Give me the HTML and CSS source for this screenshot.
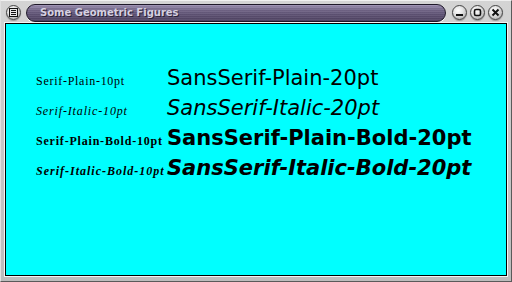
FILE: index.html
```html
<!DOCTYPE html>
<html>
<head>
<meta charset="utf-8">
<link rel="stylesheet" href="styles.css">
</head>
<body>
<div class="window">
  <div class="titlebar">
    <div class="btn menu-btn">
      <svg width="9" height="9" viewBox="0 0 9 9"><rect x="0.5" y="0.5" width="8" height="8" fill="#e8e8e8" stroke="#111"/><path d="M2 2.5H7M2 4.5H7M2 6.5H7" stroke="#111" stroke-width="1"/></svg>
    </div>
    <div class="title-pill"><span class="title-text">Some Geometric Figures</span></div>
    <div class="controls">
      <div class="btn"><svg width="9" height="9" viewBox="0 0 9 9"><rect x="1" y="6" width="7" height="2" fill="#111"/></svg></div>
      <div class="btn"><svg width="9" height="9" viewBox="0 0 9 9"><rect x="1.5" y="1.5" width="6" height="6" rx="1.5" fill="none" stroke="#111" stroke-width="1.6"/></svg></div>
      <div class="btn"><svg width="9" height="9" viewBox="0 0 9 9"><path d="M1.5 1.5L7.5 7.5M7.5 1.5L1.5 7.5" stroke="#111" stroke-width="2"/></svg></div>
    </div>
  </div>
  <div class="content">
    <div class="grid">
      <span class="serif">Serif-Plain-10pt</span>
      <span class="sans">SansSerif-Plain-20pt</span>
      <span class="serif italic">Serif-Italic-10pt</span>
      <span class="sans italic">SansSerif-Italic-20pt</span>
      <span class="serif bold">Serif-Plain-Bold-10pt</span>
      <span class="sans bold">SansSerif-Plain-Bold-20pt</span>
      <span class="serif italic bold wide">Serif-Italic-Bold-10pt</span>
      <span class="sans italic bold">SansSerif-Italic-Bold-20pt</span>
    </div>
  </div>
</div>
</body>
</html>
```

FILE: styles.css
```css
html, body {
  margin: 0;
  padding: 0;
  width: 512px;
  height: 282px;
  overflow: hidden;
}
.window {
  box-sizing: border-box;
  width: 512px;
  height: 282px;
  display: flex;
  flex-direction: column;
  background: linear-gradient(to bottom, #d4d4d4, #bcbcbc);
  border: 1px solid #5a5a5a;
  border-top-color: #f0f0f0;
  border-left-color: #e0e0e0;
  padding: 0 4px 5px 4px;
}
.titlebar {
  height: 22px;
  display: flex;
  align-items: center;
  gap: 5px;
  padding-left: 1px;
}
.btn {
  width: 15px;
  height: 15px;
  box-sizing: border-box;
  border-radius: 50%;
  border: 1px solid #444;
  background: radial-gradient(circle at 40% 35%, #ffffff 0%, #e4e4e4 40%, #9a9a9a 100%);
  display: flex;
  align-items: center;
  justify-content: center;
  box-shadow: 0 1px 1px rgba(0,0,0,0.3);
  flex: none;
}
.title-pill {
  flex: none;
  width: 420px;
  height: 18px;
  margin-top: 1px;
  box-sizing: border-box;
  border-radius: 9px;
  border: 1px solid #1e1828;
  background: repeating-linear-gradient(to bottom, rgba(255,255,255,0.06) 0 1px, rgba(0,0,0,0.04) 1px 2px), linear-gradient(to bottom, #9c90b2 0%, #74688a 30%, #5e5274 60%, #4e4262 100%);
  box-shadow: 0 1px 0 #fff;
  display: flex;
  align-items: center;
  padding-left: 13px;
}
.title-text {
  font-family: "DejaVu Sans", sans-serif;
  font-weight: bold;
  font-size: 10px;
  letter-spacing: 0;
  color: #d6d0e0;
  text-shadow: 1px 1px 0 #2a2236;
}
.controls {
  display: flex;
  gap: 3px;
  margin-left: 1px;
}
.content {
  flex: 1;
  background: #00ffff;
  border: 1px solid #000;
  box-shadow: 0 0 0 1px #f4f4f4;
  padding: 42px 0 0 30px;
}
.grid {
  display: grid;
  grid-template-columns: 131px auto;
  grid-auto-rows: 30px;
  align-items: baseline;
  line-height: 24px;
  color: #000;
}
.serif {
  font-family: "Liberation Serif", serif;
  font-size: 12px;
  letter-spacing: 0.72px;
}
.serif.italic { letter-spacing: 0.85px; }
.serif.bold { letter-spacing: 0.8px; }
.serif.italic.bold { letter-spacing: 1px; }
.sans {
  font-family: "DejaVu Sans", sans-serif;
  font-size: 21px;
}
.italic { font-style: italic; }
.bold { font-weight: bold; }
```
